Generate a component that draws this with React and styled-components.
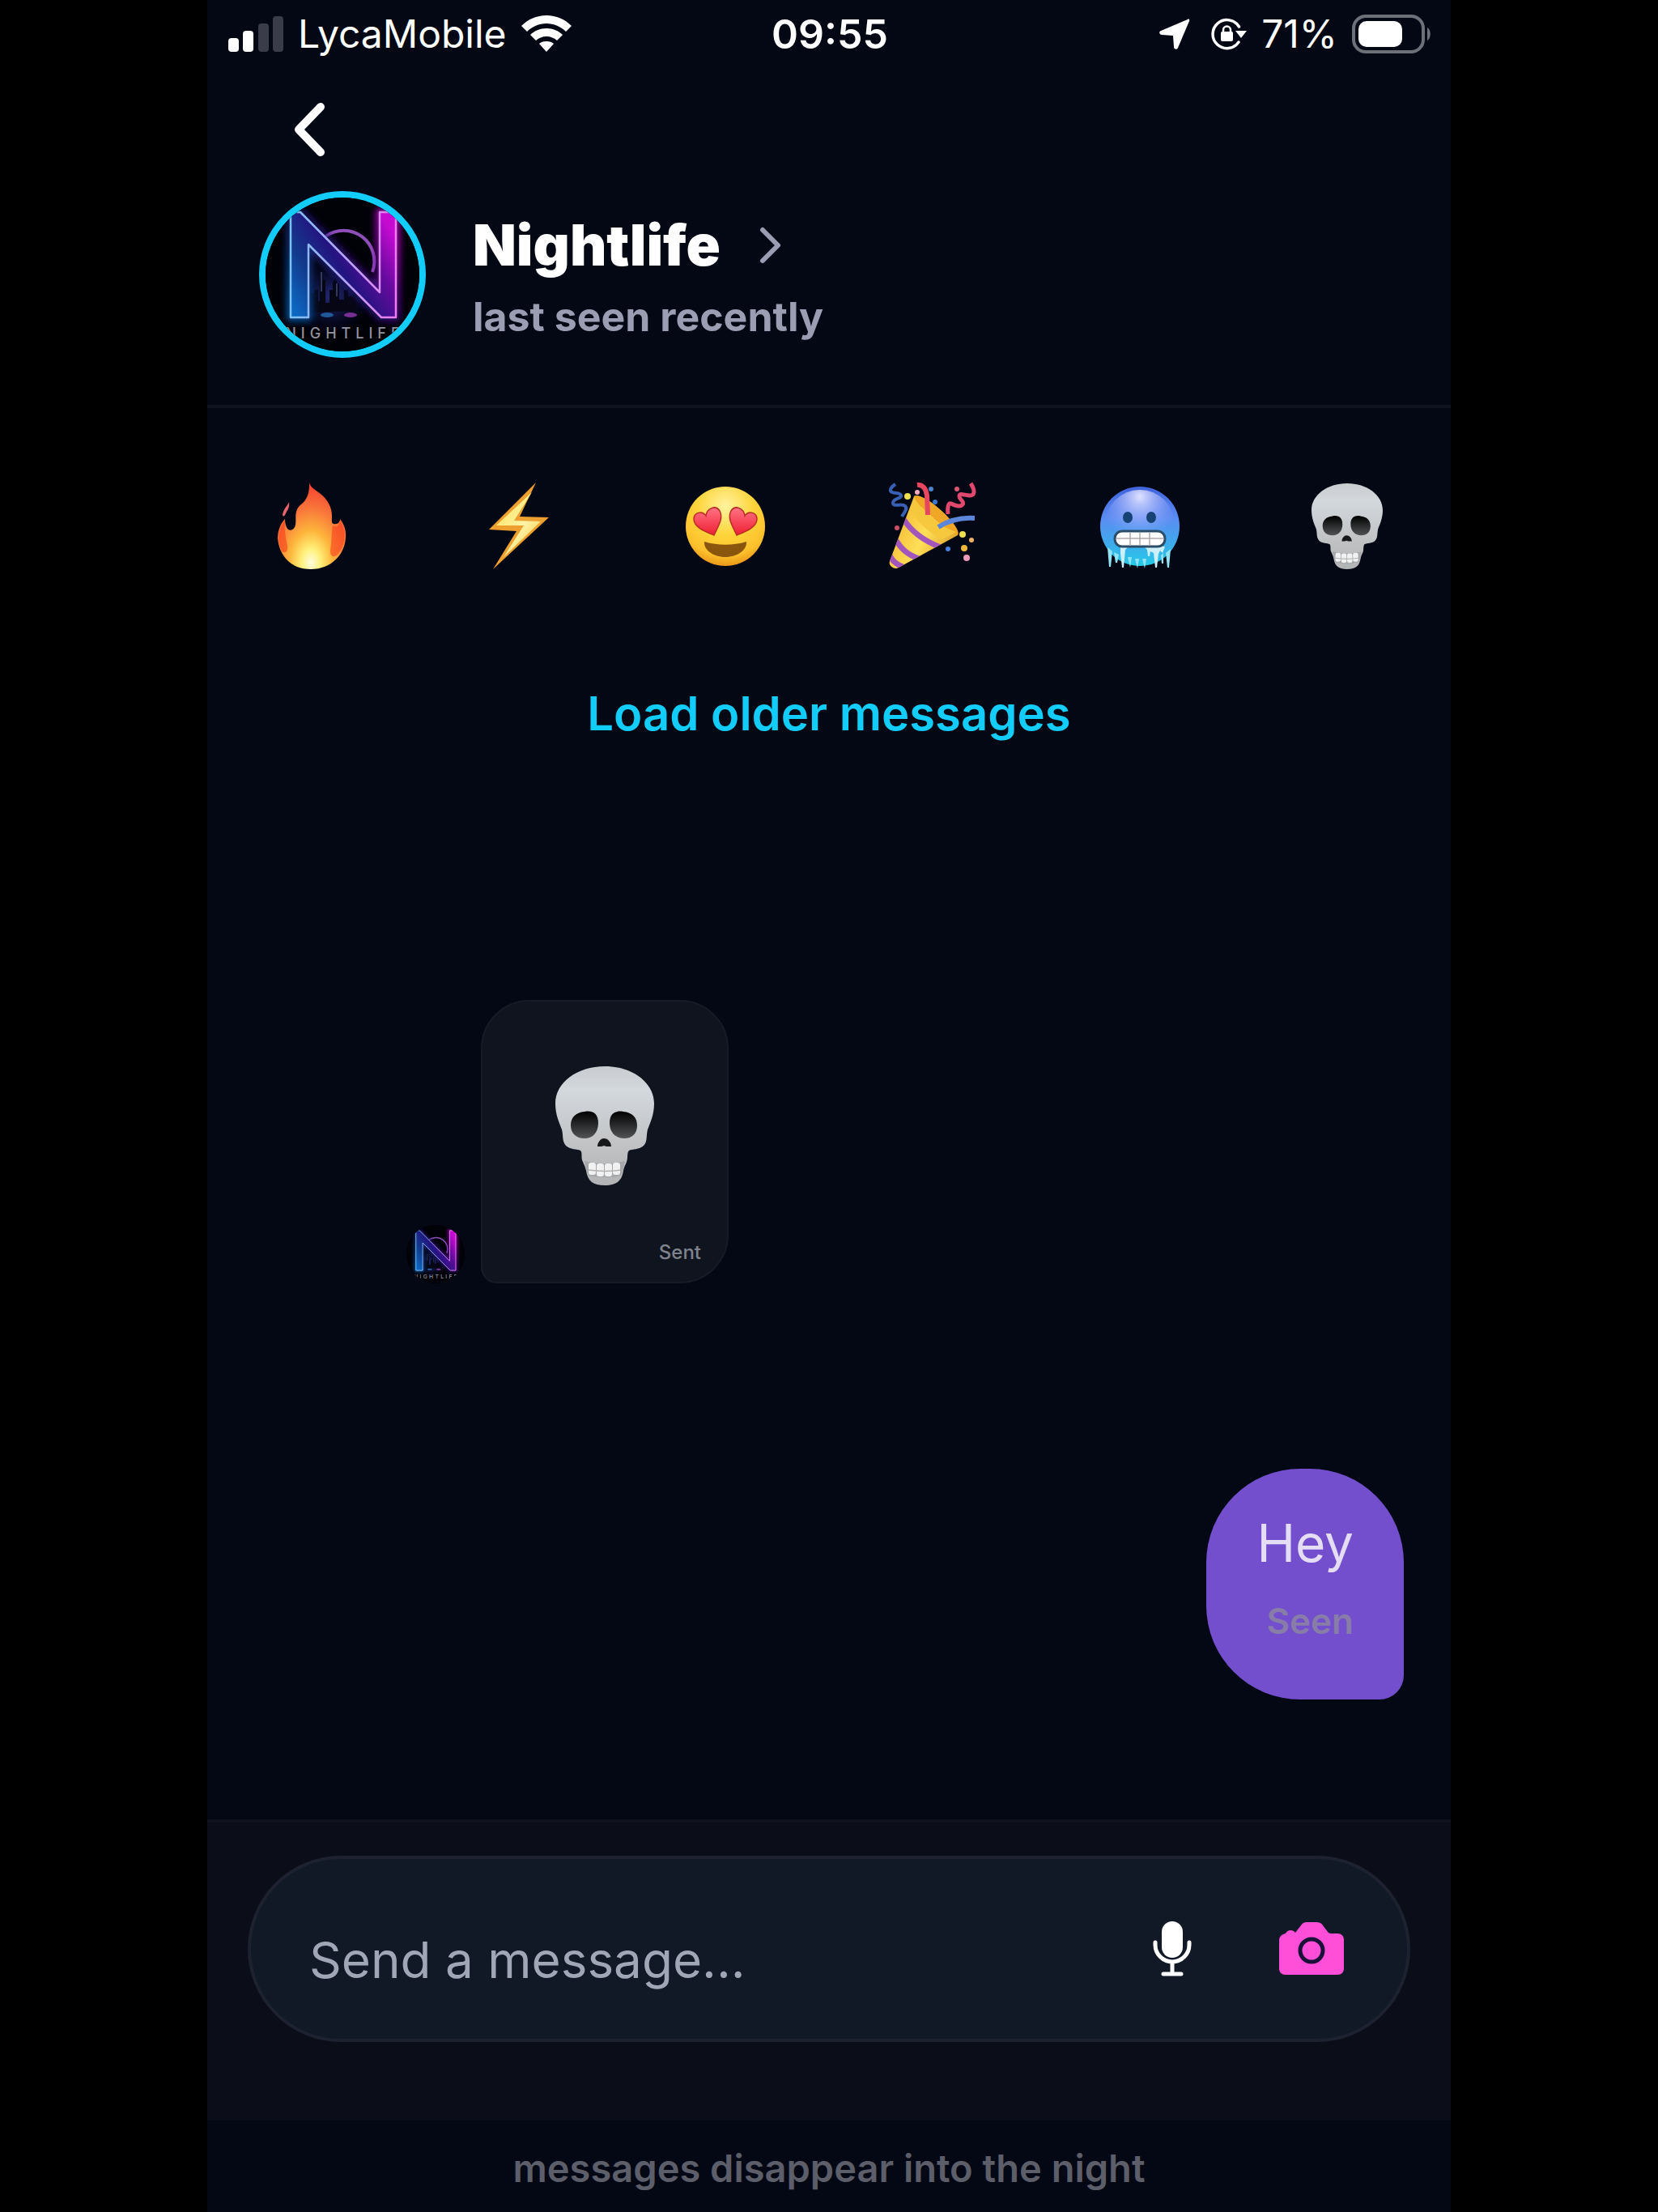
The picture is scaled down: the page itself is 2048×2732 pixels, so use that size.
import React, { useState } from 'react'
import styled, { createGlobalStyle } from 'styled-components';

const pageBg = '#040714';
const cyan = '#12cdf9';
const pink = '#ff4fd8';
const mutedFont = '#9a9eb2';

const GlobalStyle = createGlobalStyle`
    * {
        box-sizing: border-box;
    }

    body {
        margin: 0;
        background-color: #000;
        font-family: Inter, 'Liberation Sans', sans-serif;
        color: #fff;
    }

    button {
        padding: 0;
        border: none;
        background: none;
        font-family: inherit;
        color: inherit;
        cursor: pointer;
    }

    svg {
        display: block;
        flex: none;
    }
`

const Phone = styled.div`
    width: 75%;
    min-height: 100vh;
    margin: 0 auto;
    display: flex;
    flex-direction: column;
    background-color: ${pageBg};
`

const StatusBar = styled.div`
    display: grid;
    grid-template-columns: 1fr auto 1fr;
    align-items: center;
    height: 84px;
    padding: 0 24px 0 26px;
    font-size: 48px;
    line-height: 84px;
`

const StatusGroup = styled.div`
    display: flex;
    align-items: center;
    justify-content: ${({ $end }) => ($end ? 'flex-end' : 'flex-start')};
    gap: 18px;
`

const StatusIcons = styled.div`
    display: flex;
    align-items: center;
    gap: 26px;
`

const Clock = styled.time`
    font-size: 50px;
    font-weight: 600;
`

const TopBar = styled.div`
    display: flex;
    align-items: center;
    height: 152px;
    padding-left: 88px;
`

const BackButton = styled.button`
    display: flex;
    align-items: center;
    justify-content: center;
    width: 76px;
    height: 76px;
`

const Profile = styled.header`
    display: flex;
    align-items: center;
    gap: 58px;
    padding: 0 64px 58px;
    border-bottom: 4px solid #10131f;
`

const ProfileText = styled.div`
    padding-top: 16px;
`

const Avatar = styled.div`
    flex: none;
    width: ${({ $small }) => ($small ? '72px' : '206px')};
    height: ${({ $small }) => ($small ? '72px' : '206px')};
    border: ${({ $small }) => ($small ? 'none' : `8px solid ${cyan}`)};
    border-radius: 50%;
    background-color: #010108;
    overflow: hidden;
`

const NameLink = styled.a`
    display: flex;
    align-items: center;
    gap: 48px;
    color: #fff;
    text-decoration: none;
`

const Name = styled.h1`
    margin: 0;
    font-size: 70px;
    font-weight: 900;
    line-height: 88px;
`

const LastSeen = styled.p`
    margin: 0;
    font-size: 50px;
    font-weight: 700;
    line-height: 88px;
    color: ${mutedFont};
`

const Reactions = styled.div`
    display: grid;
    grid-template-columns: repeat(6, 1fr);
    height: 292px;
`

const ReactionButton = styled.button`
    display: flex;
    align-items: center;
    justify-content: center;
`

const LoadOlder = styled.button`
    align-self: center;
    height: 170px;
    font-size: 58px;
    font-weight: 600;
    color: ${cyan};
`

const Messages = styled.main`
    flex: 1;
    display: flex;
    flex-direction: column;
    gap: 229px;
    padding: 269px 58px 148px 246px;
`

const MessageRow = styled.div`
    display: flex;
    align-items: flex-end;
    justify-content: ${({ $mine }) => ($mine ? 'flex-end' : 'flex-start')};
    gap: 20px;
`

const StickerBubble = styled.div`
    display: flex;
    flex-direction: column;
    align-items: center;
    justify-content: space-between;
    width: 306px;
    height: 350px;
    padding: 80px 32px 20px;
    border: 2px solid #171b27;
    border-radius: 60px 60px 60px 20px;
    background-color: #10141f;
`

const TextBubble = styled.div`
    display: flex;
    flex-direction: column;
    align-items: flex-end;
    height: 285px;
    padding: 52px 62px 0;
    border-radius: 116px 116px 30px 116px;
    background-color: #744fcd;
`

const MessageText = styled.p`
    margin: 0;
    font-size: 64px;
    line-height: 80px;
    color: #e5dcf6;
`

const Receipt = styled.span`
    align-self: flex-end;
    font-size: ${({ $small }) => ($small ? '24px' : '44px')};
    font-weight: ${({ $small }) => ($small ? '500' : '600')};
    line-height: ${({ $small }) => ($small ? '32px' : '72px')};
    margin-top: ${({ $small }) => ($small ? '0' : '20px')};
    color: ${({ $small }) => ($small ? '#7f838d' : '#887ca8')};
`

const Composer = styled.form`
    padding: 41px 50px 97px;
    border-top: 4px solid #10131f;
    background-color: #0b0e18;
`

const InputPill = styled.div`
    display: flex;
    align-items: center;
    height: 230px;
    padding: 0 78px 0 72px;
    border: 4px solid #1d2130;
    border-radius: 115px;
    background-color: #111826;
`

const MessageInput = styled.input`
    flex: 1;
    min-width: 0;
    height: 100%;
    padding: 26px 0 0;
    border: none;
    outline: none;
    background: none;
    font-family: inherit;
    font-size: 62px;
    color: #fff;

    &::placeholder {
        color: #a1a6b6;
        opacity: 1;
    }
`

const PillButtons = styled.div`
    display: flex;
    align-items: center;
    gap: 108px;
`

const Footer = styled.footer`
    height: 114px;
    padding-top: 6px;
    font-size: 47px;
    font-weight: 600;
    line-height: 106px;
    text-align: center;
    color: #5c5e69;
`

const SignalIcon = () => (
    <svg width="68" height="44" viewBox="0 0 68 44">
        <rect x="0" y="27" width="13" height="17" rx="4" fill="#fff" />
        <rect x="18" y="18" width="13" height="26" rx="4" fill="#fff" />
        <rect x="37" y="9" width="13" height="35" rx="4" fill="#3a3c49" />
        <rect x="55" y="0" width="13" height="44" rx="4" fill="#3a3c49" />
    </svg>
)

const WifiIcon = () => (
    <svg width="62" height="46" viewBox="0 0 62 46">
        <path d="M31 0C19 0 8 5 0 13l7 7c6-6 15-10 24-10s18 4 24 10l7-7C54 5 43 0 31 0z" fill="#fff" />
        <path d="M31 16c-8 0-15 3-20 8l7 7c3-3 8-5 13-5s10 2 13 5l7-7c-5-5-12-8-20-8z" fill="#fff" />
        <path d="M31 32c-4 0-7 1-9 3l9 10 9-10c-2-2-5-3-9-3z" fill="#fff" />
    </svg>
)

const LocationIcon = () => (
    <svg width="38" height="38" viewBox="0 0 38 38">
        <path d="M35 1L2 15c-3 1-2 5 1 5l14 1 1 14c0 3 4 4 5 1L37 3c1-2-1-3-2-2z" fill="#fff" />
    </svg>
)

const RotationLockIcon = () => (
    <svg width="44" height="42" viewBox="0 0 44 42">
        <path d="M34.500 12A17.500 17.500 0 1 0 34 31" fill="none" stroke="#fff" strokeWidth="3.500" strokeLinecap="round" />
        <path d="M30 17h14l-7 9z" fill="#fff" />
        <rect x="12" y="18" width="15" height="12" rx="2" fill="#fff" />
        <path d="M15 19v-3a4.500 4.500 0 0 1 9 0v3" fill="none" stroke="#fff" strokeWidth="2.500" />
    </svg>
)

const BatteryIcon = () => (
    <svg width="98" height="48" viewBox="0 0 98 48">
        <rect x="2" y="2" width="86" height="44" rx="15" fill="none" stroke="#6d6f79" strokeWidth="4" />
        <rect x="8" y="8" width="54" height="32" rx="10" fill="#fff" />
        <path d="M93 16c5 2 5 14 0 16z" fill="#6d6f79" />
    </svg>
)

const BackIcon = () => (
    <svg width="38" height="66" viewBox="0 0 38 66">
        <path d="M33 5L6 33l27 28" fill="none" stroke="#fff" strokeWidth="10" strokeLinecap="round" strokeLinejoin="round" />
    </svg>
)

const ForwardIcon = () => (
    <svg width="28" height="46" viewBox="0 0 28 46">
        <path d="M4 4l19 19L4 42" fill="none" stroke="#9a9eb2" strokeWidth="6" strokeLinecap="round" strokeLinejoin="round" />
    </svg>
)

const MicIcon = () => (
    <svg width="48" height="68" viewBox="0 0 48 68">
        <rect x="11" y="0" width="26" height="45" rx="13" fill="#fff" />
        <path d="M3 26v3a21 21 0 0 0 42 0v-3M24 50v14M13 65h22" fill="none" stroke="#fff" strokeWidth="5" strokeLinecap="round" />
    </svg>
)

const CameraIcon = () => (
    <svg width="80" height="66" viewBox="0 0 80 66">
        <path d="M0 23c0-5 3-8 8-9 2-4 8-6 12-1l7-9c2-3 4-4 7-4h12c4 0 6 1 8 4l6 8c1 1 2 2 4 2h8c5 0 8 3 8 8v35c0 5-3 8-8 8H8c-5 0-8-3-8-8z" fill={pink} />
        <circle cx="40" cy="35" r="14" fill={pink} stroke="#1a1038" strokeWidth="5" />
    </svg>
)

const FireEmoji = () => (
    <svg width="110" height="110" viewBox="0 0 110 110">
        <defs>
            <radialGradient id="fire" gradientUnits="userSpaceOnUse" cx="55" cy="100" r="66" gradientTransform="translate(0 -48) scale(1 1.480)">
                <stop offset="0" stopColor="#fffde0" />
                <stop offset="0.180" stopColor="#fff07a" />
                <stop offset="0.400" stopColor="#fdb63c" />
                <stop offset="0.700" stopColor="#f9743a" />
                <stop offset="1" stopColor="#f4402f" />
            </radialGradient>
        </defs>
        <path d="M53 1c2 7 8 9 14 14 9 7 14 17 14 27 0 5-1 9 2 10 5 1 8-2 8-6 5 6 8 15 7 23-1 20-17 39-43 39S16 90 14 70c0-9 3-18 9-24 0 5 1 10 4 13 3 2 8 0 9-6 1-7-1-12 2-19 3-6 8-7 11-13 4-7 4-13 4-20z" fill="url(#fire)" />
        <path d="M82 54c5 3 9 0 9-6 8 14 8 30-4 43-5 3-9 0-8-7 2-10 1-20 3-30zM23 48c-9 10-10 26-4 38 5 3 8 0 7-7-1-7-4-14-3-31z" fill="#f8401c" opacity="0.600" />
        <path d="M28 25c-1 4-7 8-8 16 1 3 3 1 4-2 2-4 5-7 4-14z" fill="#e9646c" />
    </svg>
)

const BoltEmoji = () => (
    <svg width="110" height="110" viewBox="0 0 110 110">
        <defs>
            <linearGradient id="bolt" x1="0" y1="0" x2="1" y2="1">
                <stop offset="0" stopColor="#ffe04f" />
                <stop offset="0.550" stopColor="#fff3a6" />
                <stop offset="1" stopColor="#f9c23a" />
            </linearGradient>
        </defs>
        <path d="M77 1L57 43l36 1-69 64 29-47-34-2z" fill="#eda02f" />
        <path d="M72 13L50 48l33 1-46 44 25-39-34 0z" fill="url(#bolt)" />
    </svg>
)

const HeartEyesEmoji = () => (
    <svg width="110" height="110" viewBox="0 0 110 110">
        <defs>
            <radialGradient id="face" cx="0.500" cy="0.250" r="0.780">
                <stop offset="0" stopColor="#fff3a0" />
                <stop offset="0.450" stopColor="#ffd53c" />
                <stop offset="0.800" stopColor="#fcc02b" />
                <stop offset="1" stopColor="#e88d17" />
            </radialGradient>
            <linearGradient id="heart" x1="0" y1="0" x2="0" y2="1">
                <stop offset="0" stopColor="#ff7384" />
                <stop offset="1" stopColor="#ee1f33" />
            </linearGradient>
        </defs>
        <circle cx="55" cy="55" r="49" fill="url(#face)" />
        <path d="M41 66C29 61 16 56 16 46c0-8 10-11 15-4 1-9 12-14 17-6 5 9-2 19-7 30z" fill="url(#heart)" stroke="#b92a25" strokeWidth="1.500" />
        <path d="M69 66c12-5 25-10 25-20 0-8-10-11-15-4-1-9-12-14-17-6-5 9 2 19 7 30z" fill="url(#heart)" stroke="#b92a25" strokeWidth="1.500" />
        <path d="M29 74c17 5 35 5 52 0 1 10-11 19-26 19S28 84 29 74z" fill="#8a560d" />
    </svg>
)

const PartyEmoji = () => (
    <svg width="110" height="110" viewBox="0 0 110 110">
        <defs>
            <linearGradient id="cone" x1="0" y1="0.300" x2="1" y2="0.800">
                <stop offset="0" stopColor="#f0b32c" />
                <stop offset="0.500" stopColor="#ffdf58" />
                <stop offset="1" stopColor="#d99a24" />
            </linearGradient>
            <clipPath id="coneClip">
                <path d="M32 18c5-3 20 5 34 18s23 25 20 30L13 106c-5 3-13-2-11-8z" />
            </clipPath>
        </defs>
        <path d="M32 18c5-3 20 5 34 18s23 25 20 30L13 106c-5 3-13-2-11-8z" fill="url(#cone)" />
        <path d="M32 18c5-3 20 5 34 18s23 25 20 30c-8-3-20-12-31-22S33 25 32 18z" fill="#f0a626" />
        <path d="M33 21c3 8 13 16 22 24s18 13 29 17L66 72C48 60 33 47 27 34z" fill="#f5c83e" />
        <g clipPath="url(#coneClip)" fill="none" stroke="#a155bd" strokeWidth="7">
            <path d="M19 46c10 16 25 27 46 35" />
            <path d="M9 71c7 12 15 19 29 24" />
            <path d="M2 91c4 8 9 11 16 14" />
        </g>
        <path d="M9 3C3 7 1 11 5 13s10 0 11 4-10 3-10 9 11 0 15 4-2 9-4 13" fill="none" stroke="#3860b5" strokeWidth="4" />
        <path d="M36 4c7-1 11 5 12 13l1 24" fill="none" stroke="#e64660" strokeWidth="6" />
        <path d="M102 2c6 9 5 15-1 15s-13-4-13 1 7 6 4 10-10 1-14-1-5 6-4 13" fill="none" stroke="#e0486e" strokeWidth="5" />
        <path d="M107 45c-16-1-31 2-45 11" fill="none" stroke="#5b86d9" strokeWidth="6" />
        <circle cx="24" cy="18" r="4" fill="#efe04d" />
        <circle cx="36" cy="13" r="3" fill="#f5a8c0" />
        <circle cx="53" cy="9" r="3" fill="#4b86cc" />
        <circle cx="58" cy="25" r="3" fill="#3a78d0" />
        <circle cx="85" cy="9" r="3" fill="#d8566f" />
        <circle cx="11" cy="57" r="3" fill="#cf4a63" />
        <circle cx="92" cy="65" r="4" fill="#efe04d" />
        <circle cx="103" cy="72" r="3" fill="#f0b266" />
        <circle cx="94" cy="82" r="4" fill="#efb63e" />
        <circle cx="97" cy="94" r="4" fill="#ee9abb" />
        <circle cx="74" cy="83" r="3" fill="#4580e0" />
    </svg>
)

const ColdEmoji = () => (
    <svg width="110" height="110" viewBox="0 0 110 110">
        <defs>
            <linearGradient id="cold" x1="0" y1="0" x2="0" y2="1">
                <stop offset="0" stopColor="#3f63dc" />
                <stop offset="0.400" stopColor="#5b8cf2" />
                <stop offset="0.700" stopColor="#3fa9ec" />
                <stop offset="1" stopColor="#25cbe6" />
            </linearGradient>
            <radialGradient id="frost" cx="0.500" cy="0.100" r="0.600">
                <stop offset="0" stopColor="#dfe2ff" />
                <stop offset="1" stopColor="#8fa0ff" stopOpacity="0" />
            </radialGradient>
        </defs>
        <circle cx="55" cy="55" r="49" fill="url(#cold)" />
        <circle cx="55" cy="53" r="43" fill="url(#frost)" />
        <ellipse cx="40" cy="44" rx="6" ry="7" fill="#174274" />
        <ellipse cx="69" cy="44" rx="6" ry="7" fill="#174274" />
        <path d="M15 81l6 5-2 19-2 0zM23 87l6 3-2 10-2 0zM40 93l3 13 2-13zM49 95l3 12 2-12zM58 95l3 12 2-12z" fill="#8fe3f4" />
        <path d="M31 80h10l-4 4-2 22-2 0-2-18zM60 80h26l-3 8-3-3-2 4-2 17-2 0-2-18-4-2-1 6-2 0-1-8z" fill="#cdeffa" />
        <path d="M93 83l-6 5 2 18 2 0zM84 88l-3 3 1 10 2 0z" fill="#8fe3f4" />
        <rect x="24" y="61" width="62" height="19" rx="9" fill="#fff" stroke="#2c4c67" strokeWidth="3" />
        <path d="M26 70h58M43 63v16M55 63v16M67 63v16" fill="none" stroke="#b3a9ad" strokeWidth="1.500" />
    </svg>
)

const SkullEmoji = ({ width, height, id }) => (
    <svg width={width} height={height} viewBox="0 0 122 147">
        <defs>
            <linearGradient id={`${id}Bone`} x1="0" y1="0" x2="0" y2="1">
                <stop offset="0" stopColor="#c9cccf" />
                <stop offset="0.200" stopColor="#d3d8dd" />
                <stop offset="0.600" stopColor="#c3c5c7" />
                <stop offset="1" stopColor="#b2b3b4" />
            </linearGradient>
            <linearGradient id={`${id}Socket`} x1="0" y1="0" x2="0" y2="1">
                <stop offset="0" stopColor="#000" />
                <stop offset="1" stopColor="#515355" />
            </linearGradient>
        </defs>
        <path d="M61 0C27 0 0 20 0 46c0 14 5 24 8 32 2 8 0 14 5 20 5 5 14 4 18 6 3 3 0 9 3 14 2 5 3 6 4 11 2 13 9 18 23 18s21-5 23-18c1-5 2-6 4-11 2-5 0-11 3-14 4-2 13-1 18-6s3-12 5-20c3-8 8-18 8-32C122 20 95 0 61 0z" fill={`url(#${id}Bone)`} />
        <path d="M36 56c11-2 17 3 17 14 0 12-7 19-17 19s-17-6-17-16 6-16 17-17zM84 56c-11-2-17 3-17 14 0 12 8 19 18 19s16-6 16-16-6-16-17-17z" fill={`url(#${id}Socket)`} />
        <path d="M60 89c5 0 9 5 9 10l-6 0-3-1-3 1-5 0c0-5 4-10 8-10z" fill="#171819" />
        <path d="M36 117c16 4 34 4 50 0-1 3-2 11-5 18-13 3-27 3-40 0-3-7-4-14-5-18z" fill="#a5a7a8" />
        <g fill="#f1f1f1">
            <rect x="41" y="119" width="9" height="15" rx="3" />
            <rect x="51" y="120" width="9" height="16" rx="3" />
            <rect x="61" y="120" width="9" height="16" rx="3" />
            <rect x="71" y="119" width="9" height="15" rx="3" />
        </g>
        <path d="M41 128c13 2 26 2 40 0" fill="none" stroke="#b2b3b4" strokeWidth="1.500" />
    </svg>
)

const LogoArt = ({ id }) => (
    <svg width="100%" height="100%" viewBox="0 0 190 190">
        <defs>
            <linearGradient id={`${id}Fill`} gradientUnits="userSpaceOnUse" x1="31" y1="130" x2="161" y2="50">
                <stop offset="0" stopColor="#0d66c0" />
                <stop offset="0.250" stopColor="#123a8c" />
                <stop offset="0.500" stopColor="#231480" />
                <stop offset="0.750" stopColor="#640b9c" />
                <stop offset="1" stopColor="#c60ad2" />
            </linearGradient>
            <linearGradient id={`${id}Edge`} gradientUnits="userSpaceOnUse" x1="31" y1="80" x2="161" y2="80">
                <stop offset="0" stopColor="#79c4f5" />
                <stop offset="0.500" stopColor="#b3a5f5" />
                <stop offset="1" stopColor="#f07cf0" />
            </linearGradient>
            <radialGradient id={`${id}City`} gradientUnits="userSpaceOnUse" cx="82" cy="122" r="48">
                <stop offset="0" stopColor="#29328c" stopOpacity="0.900" />
                <stop offset="1" stopColor="#0a0c40" stopOpacity="0" />
            </radialGradient>
            <filter id={`${id}Glow`} x="-20%" y="-20%" width="140%" height="140%">
                <feGaussianBlur stdDeviation="5" />
            </filter>
        </defs>
        <rect width="190" height="190" fill="#010108" />
        <circle cx="82" cy="122" r="48" fill={`url(#${id}City)`} />
        <path d="M55 142v-24h5v-4h5v14h2v-26l2-12 2 12h3v28h5v-16h4v-8l3-8 3 8h2v20h6v-12h5v8h6v-16h4v34z" fill="#060614" />
        <path d="M69 92v24M88 106v16" stroke="#6c78b8" strokeWidth="1.500" opacity="0.600" />
        <ellipse cx="76" cy="145" rx="8" ry="3" fill="#2f8ae0" opacity="0.600" />
        <ellipse cx="105" cy="145" rx="8" ry="3" fill="#c14be0" opacity="0.600" />
        <path d="M74 48A38 38 0 0 1 132 92" fill="none" stroke="#8e4fb8" strokeWidth="4" />
        <path d="M31 18h12l98 99V18h20v130h-18L53 58v90H31z" fill="none" stroke={`url(#${id}Fill)`} strokeWidth="8" filter={`url(#${id}Glow)`} />
        <path d="M31 18h12l98 99V18h20v130h-18L53 58v90H31z" fill={`url(#${id}Fill)`} stroke={`url(#${id}Edge)`} strokeWidth="2.500" strokeLinejoin="round" />
        <text x="98" y="174" textAnchor="middle" fontSize="18" fontWeight="500" letterSpacing="6" fill="#94929e">NIGHTLIFE</text>
    </svg>
)

const reactions = [
    { label: 'Fire', icon: <FireEmoji /> },
    { label: 'Lightning', icon: <BoltEmoji /> },
    { label: 'Heart eyes', icon: <HeartEyesEmoji /> },
    { label: 'Party', icon: <PartyEmoji /> },
    { label: 'Cold', icon: <ColdEmoji /> },
    { label: 'Skull', icon: <SkullEmoji id="reactionSkull" width={88} height={106} /> },
];

const App = () => {
    const [message, setMessage] = useState('');

  return (
    <>
    <GlobalStyle />
    <Phone>
        <StatusBar>
            <StatusGroup>
                <SignalIcon />
                <span>LycaMobile</span>
                <WifiIcon />
            </StatusGroup>
            <Clock>09:55</Clock>
            <StatusGroup $end>
                <StatusIcons>
                    <LocationIcon />
                    <RotationLockIcon />
                </StatusIcons>
                <span>71%</span>
                <BatteryIcon />
            </StatusGroup>
        </StatusBar>
        <TopBar>
            <BackButton aria-label="Back"><BackIcon /></BackButton>
        </TopBar>
        <Profile>
            <Avatar><LogoArt id="headerLogo" /></Avatar>
            <ProfileText>
                <NameLink href="#profile">
                    <Name>Nightlife</Name>
                    <ForwardIcon />
                </NameLink>
                <LastSeen>last seen recently</LastSeen>
            </ProfileText>
        </Profile>
        <Reactions>
            {reactions.map((item) => (
                <ReactionButton key={item.label} aria-label={item.label}>{item.icon}</ReactionButton>
            ))}
        </Reactions>
        <LoadOlder>Load older messages</LoadOlder>
        <Messages>
            <MessageRow>
                <Avatar $small><LogoArt id="messageLogo" /></Avatar>
                <StickerBubble>
                    <SkullEmoji id="messageSkull" width={122} height={147} />
                    <Receipt $small>Sent</Receipt>
                </StickerBubble>
            </MessageRow>
            <MessageRow $mine>
                <TextBubble>
                    <MessageText>Hey</MessageText>
                    <Receipt>Seen</Receipt>
                </TextBubble>
            </MessageRow>
        </Messages>
        <Composer onSubmit={(e) => e.preventDefault()}>
            <InputPill>
                <MessageInput
                    aria-label="Message"
                    placeholder="Send a message..."
                    value={message}
                    onChange={(e) => setMessage(e.target.value)}
                />
                <PillButtons>
                    <button type="button" aria-label="Record voice"><MicIcon /></button>
                    <button type="button" aria-label="Open camera"><CameraIcon /></button>
                </PillButtons>
            </InputPill>
        </Composer>
        <Footer>messages disappear into the night</Footer>
    </Phone>
    </>
  )
}

export default App
